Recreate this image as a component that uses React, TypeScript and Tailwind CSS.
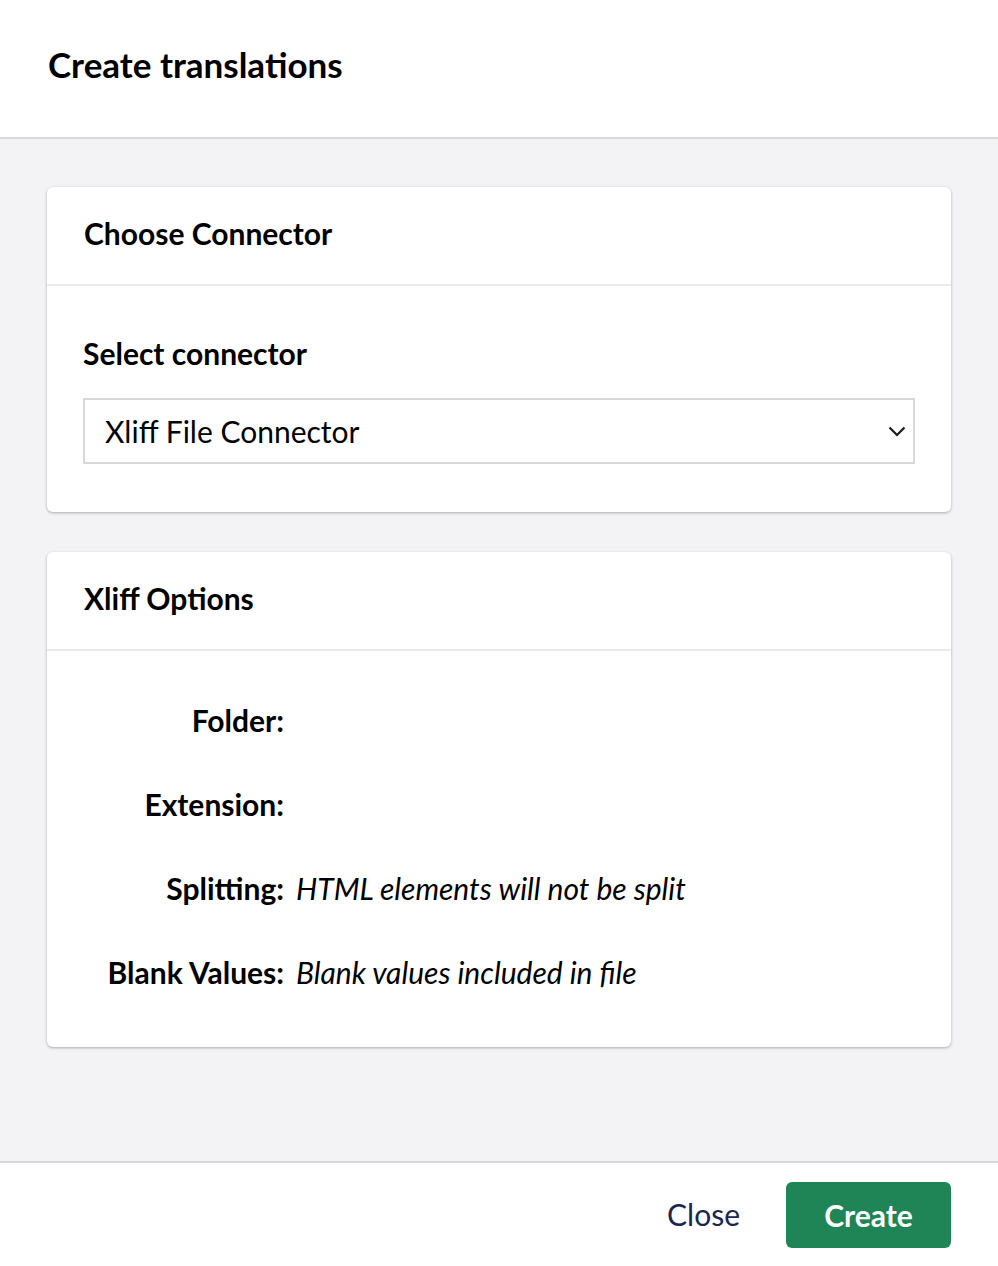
import React from "react";

export default function App() {
  const rows: [string, string][] = [
    ["Folder:", ""],
    ["Extension:", ""],
    ["Splitting:", "HTML elements will not be split"],
    ["Blank Values:", "Blank values included in file"],
  ];
  return (
    <div
      className="w-[998px] h-[1266px] flex flex-col bg-white text-black"
      style={{ fontFamily: "Lato, 'Noto Sans', sans-serif" }}
    >
      <div className="h-[139px] shrink-0 flex items-center px-[48px] border-b-2 border-[#d8d7d9] bg-white">
        <h1 className="text-[35px] font-bold leading-none -mt-[8px]">Create translations</h1>
      </div>
      <div className="flex-1 bg-[#f3f3f5] px-[47px] pt-[48px] flex flex-col gap-[40px]">
        <div className="bg-white rounded-[6px] shadow-[0_1px_3px_rgba(0,0,0,0.3)]">
          <div className="h-[99px] flex items-center px-[37px] border-b-2 border-[#ebebed]">
            <h2 className="text-[30px] font-bold leading-none -mt-[6px]">Choose Connector</h2>
          </div>
          <div className="px-[36px] pt-[52px] pb-[48px]">
            <div className="text-[30px] font-bold leading-none mb-[30px]">Select connector</div>
            <div className="h-[66px] border-2 border-[#d8d7d9] flex items-center justify-between pl-[20px] pr-[7px]">
              <span className="text-[30px] leading-none">Xliff File Connector</span>
              <svg width="18" height="11" viewBox="0 0 18 11">
                <path d="M1.5 1.5 L9 9 L16.5 1.5" fill="none" stroke="#1b1b1b" strokeWidth="2.2" />
              </svg>
            </div>
          </div>
        </div>
        <div className="bg-white rounded-[6px] shadow-[0_1px_3px_rgba(0,0,0,0.3)]">
          <div className="h-[99px] flex items-center px-[37px] border-b-2 border-[#ebebed]">
            <h2 className="text-[30px] font-bold leading-none -mt-[6px]">Xliff Options</h2>
          </div>
          <div className="pt-[27px] pb-[33px] flex flex-col">
            {rows.map(([l, v]) => (
              <div key={l} className="h-[84px] flex items-center">
                <div className="w-[237px] text-right text-[30px] font-bold leading-none">{l}</div>
                <div className="ml-[12px] text-[30px] italic leading-none">{v}</div>
              </div>
            ))}
          </div>
        </div>
      </div>
      <div className="h-[105px] shrink-0 border-t-2 border-[#d8d7d9] bg-white flex items-center justify-end px-[47px] gap-[46px]">
        <button className="text-[30px] text-[#1b264f] leading-none -mt-[2px]">Close</button>
        <button className="w-[165px] h-[66px] rounded-[6px] bg-[#1f8456] text-white text-[30px] font-bold leading-none">
          Create
        </button>
      </div>
    </div>
  );
}
